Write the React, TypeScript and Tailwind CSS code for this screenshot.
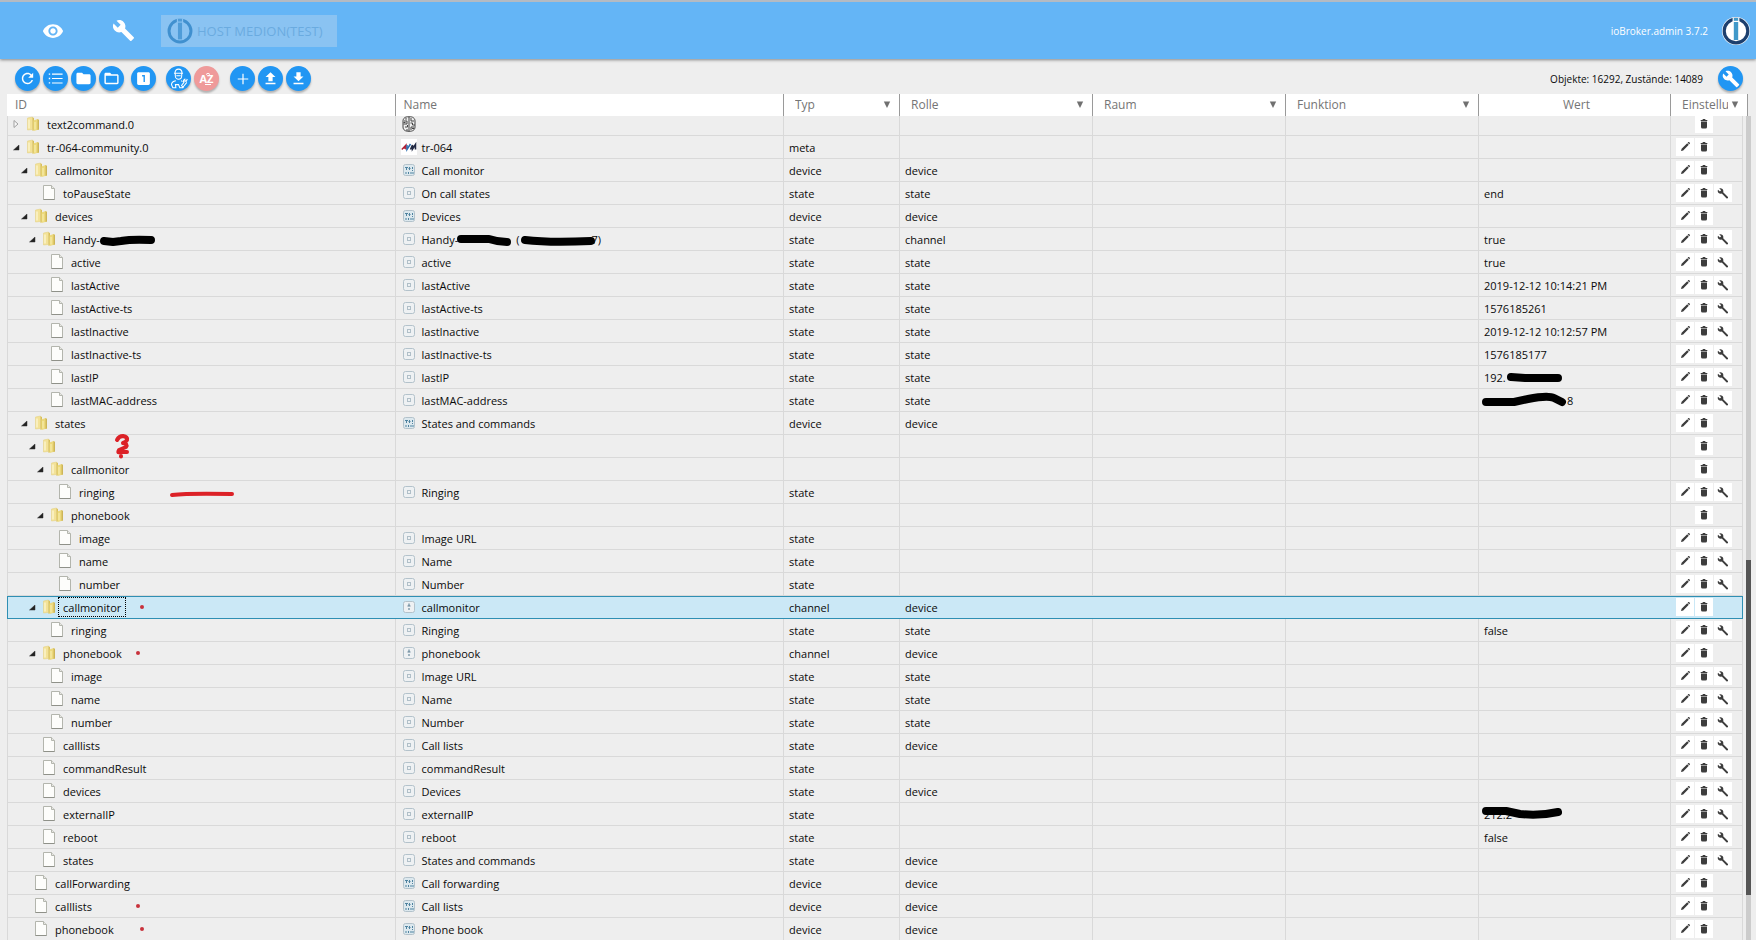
import React from "react";

type IconKind = "device" | "state" | "channel" | "brain" | "avm";
type Row = {
  level: number;
  id: React.ReactNode;
  node: "closed" | "open" | "leaf";
  icon?: IconKind;
  name?: React.ReactNode;
  type?: string;
  role?: string;
  value?: React.ReactNode;
  actions: string; // e = edit, d = delete, c = configure
  selected?: boolean;
};

const WRENCH =
  "M22.7 19l-9.1-9.1c.9-2.3.4-5-1.5-6.9-2-2-5-2.4-7.4-1.3L9 6 6 9 1.6 4.7C.4 7.1.9 10.1 2.9 12.1c1.9 1.9 4.6 2.4 6.9 1.5l9.1 9.1c.4.4 1 .4 1.4 0l2.3-2.3c.5-.4.5-1.1.1-1.4z";
const EYE =
  "M12 4.5C7 4.5 2.73 7.61 1 12c1.73 4.39 6 7.5 11 7.5s9.27-3.11 11-7.5c-1.73-4.39-6-7.5-11-7.5zM12 17c-2.76 0-5-2.24-5-5s2.24-5 5-5 5 2.24 5 5-2.24 5-5 5zm0-8c-1.66 0-3 1.34-3 3s1.34 3 3 3 3-1.34 3-3-1.34-3-3-3z";
const REFRESH =
  "M17.65 6.35C16.2 4.9 14.21 4 12 4c-4.42 0-7.99 3.58-7.99 8s3.57 8 7.99 8c3.73 0 6.84-2.55 7.73-6h-2.08c-.82 2.33-3.04 4-5.65 4-3.31 0-6-2.69-6-6s2.69-6 6-6c1.66 0 3.14.69 4.22 1.78L13 11h7V4l-2.35 2.35z";
const LIST =
  "M2.5 4.8h2v2h-2zM2.5 11h2v2h-2zM2.5 17.2h2v2h-2zM7 5.1h15v1.5H7zM7 11.3h15v1.5H7zM7 17.5h15V19H7z";
const FOLDER =
  "M10 4H4c-1.1 0-1.99.9-1.99 2L2 18c0 1.1.9 2 2 2h16c1.1 0 2-.9 2-2V8c0-1.1-.9-2-2-2h-8l-2-2z";
const FOLDER_OPEN =
  "M20 6h-8l-2-2H4c-1.1 0-1.99.9-1.99 2L2 18c0 1.1.9 2 2 2h16c1.1 0 2-.9 2-2V8c0-1.1-.9-2-2-2zm0 12H4V8h16v10z";
const ONE =
  "M19 3H5c-1.1 0-2 .9-2 2v14c0 1.1.9 2 2 2h14c1.1 0 2-.9 2-2V5c0-1.1-.9-2-2-2zm-5 14h-2V9h-2V7h4v10z";
const ADD = "M19 12.8h-6.2V19h-1.6v-6.2H5v-1.6h6.2V5h1.6v6.2H19z";
const UPLOAD = "M9 16h6v-6h4l-7-7-7 7h4zm-4 2h14v2H5z";
const DOWNLOAD = "M19 9h-4V3H9v6H5l7 7 7-7zM5 18v2h14v-2H5z";

function Glyph({ d, className }: { d: string; className: string }) {
  return (
    <svg viewBox="0 0 24 24" className={className} fill="currentColor" aria-hidden="true">
      <path d={d} />
    </svg>
  );
}

function Logo({ className, ring, bar, disc }: { className: string; ring: string; bar: string; disc: string }) {
  return (
    <svg viewBox="0 0 28 28" className={className} aria-hidden="true">
      <circle cx="14" cy="14" r="14" fill={disc} />
      <circle cx="14" cy="14" r="11.8" fill="none" stroke={ring} strokeWidth="3.2" />
      <rect x="10.6" y="0.5" width="6.8" height="4.6" fill={disc} />
      <rect x="11.8" y="1" width="4.4" height="2.8" fill={bar} />
      <rect x="11.8" y="5" width="4.4" height="18" fill={bar} />
    </svg>
  );
}

function Scribble({ w, d }: { w: number; d: string }) {
  return (
    <svg width={w} height="14" viewBox={`0 0 ${w} 14`} className="shrink-0 overflow-visible" aria-hidden="true">
      <path d={d} fill="none" stroke="#000" strokeWidth="8" strokeLinecap="round" strokeLinejoin="round" />
    </svg>
  );
}

function Mark({ className, children }: { className: string; children: React.ReactNode }) {
  return (
    <svg
      viewBox="0 0 66 24"
      className={`pointer-events-none absolute top-0 h-6 w-[66px] overflow-visible ${className}`}
      fill="none"
      stroke="#dc2127"
      strokeWidth="4"
      strokeLinecap="round"
      strokeLinejoin="round"
      aria-hidden="true"
    >
      {children}
    </svg>
  );
}

const dot = <circle cx="3" cy="11" r="2" fill="#c8323c" stroke="none" />;

const rows: Row[] = [
  { level: 0, id: "text2command.0", node: "closed", icon: "brain", actions: "d" },
  { level: 0, id: "tr-064-community.0", node: "open", icon: "avm", name: "tr-064", type: "meta", actions: "ed" },
  { level: 1, id: "callmonitor", node: "open", icon: "device", name: "Call monitor", type: "device", role: "device", actions: "ed" },
  { level: 2, id: "toPauseState", node: "leaf", icon: "state", name: "On call states", type: "state", role: "state", value: "end", actions: "edc" },
  { level: 1, id: "devices", node: "open", icon: "device", name: "Devices", type: "device", role: "device", actions: "ed" },
  {
    level: 2,
    id: (<>Handy-<Scribble w={56} d="M4 8 L13 9 L21 8 Q32 6 51 7" /></>),
    node: "open",
    icon: "state",
    name: (<>Handy-<Scribble w={54} d="M3 6 L31 6 Q40 9 49 9" /><span className="ml-1">(</span><Scribble w={72} d="M5 7 Q30 10 71 8" />7)</>),
    type: "state", role: "channel", value: "true", actions: "edc",
  },
  { level: 3, id: "active", node: "leaf", icon: "state", name: "active", type: "state", role: "state", value: "true", actions: "edc" },
  { level: 3, id: "lastActive", node: "leaf", icon: "state", name: "lastActive", type: "state", role: "state", value: "2019-12-12 10:14:21 PM", actions: "edc" },
  { level: 3, id: "lastActive-ts", node: "leaf", icon: "state", name: "lastActive-ts", type: "state", role: "state", value: "1576185261", actions: "edc" },
  { level: 3, id: "lastInactive", node: "leaf", icon: "state", name: "lastInactive", type: "state", role: "state", value: "2019-12-12 10:12:57 PM", actions: "edc" },
  { level: 3, id: "lastInactive-ts", node: "leaf", icon: "state", name: "lastInactive-ts", type: "state", role: "state", value: "1576185177", actions: "edc" },
  {
    level: 3, id: "lastIP", node: "leaf", icon: "state", name: "lastIP", type: "state", role: "state",
    value: (<>192.<Scribble w={58} d="M5 6 L19 7 L52 7" /></>), actions: "edc",
  },
  {
    level: 3, id: "lastMAC-address", node: "leaf", icon: "state", name: "lastMAC-address", type: "state", role: "state",
    value: (<><Scribble w={83} d="M2 8 L30 8 L44 5 Q64 1 70 4 L78 8" />8</>), actions: "edc",
  },
  { level: 1, id: "states", node: "open", icon: "device", name: "States and commands", type: "device", role: "device", actions: "ed" },
  {
    level: 2,
    id: (<Mark className="left-[106px]"><path d="M2 5 Q4 1 8 1 Q13 2 12 5 Q11 7 8 8 Q13 9 11 12 L4 15 Q2 18 5 17 L12 17 M6 21 V21.5" /></Mark>),
    node: "open", actions: "d",
  },
  { level: 3, id: "callmonitor", node: "open", actions: "d" },
  {
    level: 4,
    id: (<>ringing<Mark className="left-[160px]"><path d="M3 14 Q20 12 63 13" /></Mark></>),
    node: "leaf", icon: "state", name: "Ringing", type: "state", actions: "edc",
  },
  { level: 3, id: "phonebook", node: "open", actions: "d" },
  { level: 4, id: "image", node: "leaf", icon: "state", name: "Image URL", type: "state", actions: "edc" },
  { level: 4, id: "name", node: "leaf", icon: "state", name: "Name", type: "state", actions: "edc" },
  { level: 4, id: "number", node: "leaf", icon: "state", name: "Number", type: "state", actions: "edc" },
  {
    level: 2, id: (<>callmonitor<Mark className="left-[130px]">{dot}</Mark></>),
    node: "open", icon: "channel", name: "callmonitor", type: "channel", role: "device", actions: "ed", selected: true,
  },
  { level: 3, id: "ringing", node: "leaf", icon: "state", name: "Ringing", type: "state", role: "state", value: "false", actions: "edc" },
  {
    level: 2, id: (<>phonebook<Mark className="left-[126px]">{dot}</Mark></>),
    node: "open", icon: "channel", name: "phonebook", type: "channel", role: "device", actions: "ed",
  },
  { level: 3, id: "image", node: "leaf", icon: "state", name: "Image URL", type: "state", role: "state", actions: "edc" },
  { level: 3, id: "name", node: "leaf", icon: "state", name: "Name", type: "state", role: "state", actions: "edc" },
  { level: 3, id: "number", node: "leaf", icon: "state", name: "Number", type: "state", role: "state", actions: "edc" },
  { level: 2, id: "calllists", node: "leaf", icon: "state", name: "Call lists", type: "state", role: "device", actions: "edc" },
  { level: 2, id: "commandResult", node: "leaf", icon: "state", name: "commandResult", type: "state", actions: "edc" },
  { level: 2, id: "devices", node: "leaf", icon: "state", name: "Devices", type: "state", role: "device", actions: "edc" },
  {
    level: 2, id: "externalIP", node: "leaf", icon: "state", name: "externalIP", type: "state",
    value: (
      <span className="relative flex">
        212.2
        <span className="absolute left-0 top-0 flex"><Scribble w={80} d="M2 4 L22 4 L36 7 Q56 9 74 5" /></span>
      </span>
    ),
    actions: "edc",
  },
  { level: 2, id: "reboot", node: "leaf", icon: "state", name: "reboot", type: "state", value: "false", actions: "edc" },
  { level: 2, id: "states", node: "leaf", icon: "state", name: "States and commands", type: "state", role: "device", actions: "edc" },
  { level: 1, id: "callForwarding", node: "leaf", icon: "device", name: "Call forwarding", type: "device", role: "device", actions: "ed" },
  {
    level: 1, id: (<>calllists<Mark className="left-[126px]">{dot}</Mark></>),
    node: "leaf", icon: "device", name: "Call lists", type: "device", role: "device", actions: "ed",
  },
  {
    level: 1, id: (<>phonebook<Mark className="left-[130px]">{dot}</Mark></>),
    node: "leaf", icon: "device", name: "Phone book", type: "device", role: "device", actions: "ed",
  },
];

const indent = ["pl-px", "pl-[9px]", "pl-[17px]", "pl-[25px]", "pl-[33px]"];

function FolderIcon() {
  return (
    <svg viewBox="0 0 16 16" className="size-4 shrink-0" aria-hidden="true">
      <path d="M2.5 2 7.500 1v12.500L2.500 14z" fill="#f3e297" stroke="#e3cf7c" strokeWidth=".5" />
      <path d="M7.500 1.300 9 2v12l-1.500 1z" fill="#d9c05a" />
      <path d="M8.500 4.500 12.500 3l1.500 1v9.500L8.500 15z" fill="#ecd97c" />
      <path d="M12.500 3 14 4v9.500l-1.500.5z" fill="#cdb558" />
      <path d="M4 3.500v9" stroke="#fdf8d8" strokeWidth="1.200" />
      <path d="M10 6v7.500" stroke="#f9f0b6" strokeWidth="1" />
    </svg>
  );
}

function FileIcon() {
  return (
    <svg viewBox="0 0 16 16" className="size-4 shrink-0" aria-hidden="true">
      <path d="M2.500 .5h8l3 3v11h-11z" fill="#fdfdfb" stroke="#b3b5ad" />
      <path d="M10.500 .5v3h3" fill="#e8e8e4" stroke="#b4b6ae" />
      <path d="M2.500 14.500h11" stroke="#8f9189" />
    </svg>
  );
}

function Expander({ node }: { node: Row["node"] }) {
  return (
    <svg viewBox="0 0 12 12" className="size-3 shrink-0" aria-hidden="true">
      {node === "open" && <path d="M9 4v5H3.500z" fill="#222" stroke="#333" strokeWidth=".5" />}
      {node === "closed" && <path d="M4 2.500 8 6 4 9.500z" fill="#f8f8f8" stroke="#a0a0a0" />}
    </svg>
  );
}

function NameIcon({ kind }: { kind: IconKind }) {
  if (kind === "avm")
    return (
      <svg viewBox="0 0 16 16" className="size-4 shrink-0" aria-hidden="true">
        <path d="M0 0h16v16H0z" fill="#fff" />
        <path d="M.8 10.500 5 6v4.500M2 9h3" fill="none" stroke="#b02036" strokeWidth="1.400" />
        <path d="M6 6v4.500L9.500 5" fill="none" stroke="#2d6fb0" strokeWidth="1.500" />
        <path d="M9.500 10.500 11.500 6v4L14.500 5.500v5" fill="none" stroke="#222a44" strokeWidth="1.600" />
      </svg>
    );
  if (kind === "brain")
    return (
      <svg viewBox="0 0 16 16" className="size-4 shrink-0" fill="none" stroke="#444" strokeWidth="1" aria-hidden="true">
        <path d="M8 .8C4 .4 2 2.500 2 5v6c0 3 2.500 4.500 6 4.300 3.500.2 6-1.300 6-4.300V5c0-2.500-2-4.600-6-4.200z" />
        <path d="M8 1v14M3 5h3v3H2.500M4 11h2.500V9M6 13v2M5 1.800v2M10 2v3h3M9.500 7h2v2h2.500M10 14v-3h3M4.500 6.500h-2M11 12.500h2" />
      </svg>
    );
  return (
    <svg viewBox="0 0 16 16" className="size-4 shrink-0" fill="none" aria-hidden="true">
      <rect x="2.500" y="2.500" width="11" height="11" rx="2" stroke="#b3c2cb" fill={kind === "device" ? "#dce8ee" : "#eef1f3"} />
      {kind === "state" && <rect x="6.500" y="6.500" width="3" height="3" stroke="#b0bfc8" />}
      {kind === "channel" && <path d="M8 4.500v3M8 9v2M6.500 7h3" stroke="#5f8094" strokeWidth="1.100" />}
      {kind === "device" && (
        <path d="M4 5.500h3M5.500 5v3M8.500 5v3M11.500 5v2M7.500 6.500h2M5 10v2M7.500 10v2M10 10v2M12 10v2M11.500 8v1" stroke="#4f83a0" strokeWidth="1" />
      )}
    </svg>
  );
}

const actionInfo: Record<string, { label: string; art: React.ReactNode }> = {
  e: {
    label: "Bearbeiten",
    art: <path d="M5 13l.6-2.200 5.600-5.600 1.600 1.600-5.600 5.600zM11.700 4.700l.6-.6q.5-.3 1 .1l.5.5q.4.500 0 1l-.6.6z" />,
  },
  d: {
    label: "Löschen",
    art: <path d="M6 6.500h6V12q0 1.500-1.500 1.500h-3Q6 13.500 6 12zM5.700 5h1.600l.7-.9h2l.7.9h1.600v1.100H5.700z" />,
  },
  c: {
    label: "Einstellungen",
    art: <path d="M14 13 9.200 8.300c.4-1.200.1-2.400-.7-3.200-1-.9-2.300-1-3.200-.6l1.900 1.800-1.300 1.300L4 5.800c-.5 1-.3 2.300.6 3.100.9.800 2.100 1 3.200.6l4.600 4.800q1 .5 1.600-.3z" />,
  },
};

function Action({ kind, present }: { kind: string; present: boolean }) {
  if (!present) return <span className="size-[18px]" />;
  const { label, art } = actionInfo[kind];
  return (
    <button type="button" aria-label={label} className="size-[18px] bg-white text-[#3d3d3d]">
      <svg viewBox="0 0 18 18" className="size-[18px]" fill="currentColor" aria-hidden="true">
        {art}
      </svg>
    </button>
  );
}

function Round({ label, tone = "bg-[#2196f3]", children }: { label: string; tone?: string; children: React.ReactNode }) {
  return (
    <button
      type="button"
      aria-label={label}
      className={`flex size-[25px] items-center justify-center rounded-full text-white shadow-[0_2px_2px_rgba(0,0,0,0.25)] ${tone}`}
    >
      {children}
    </button>
  );
}

function Columns() {
  return (
    <colgroup>
      <col />
      <col />
      <col className="w-[116px]" />
      <col className="w-[193px]" />
      <col className="w-[193px]" />
      <col className="w-[193px]" />
      <col className="w-[192px]" />
      <col className="w-[72px]" />
    </colgroup>
  );
}

function FilterSelect({ label, tight = false }: { label: string; tight?: boolean }) {
  return (
    <div className={`flex items-center overflow-hidden pl-[11px] ${tight ? "gap-[3px] pr-1" : "pr-2"}`}>
      <select aria-label={label} className="w-0 min-w-0 flex-1 appearance-none overflow-hidden bg-transparent">
        <option>{label}</option>
      </select>
      <svg viewBox="0 0 8 8" className="size-2 shrink-0" aria-hidden="true">
        <path d="M.8 .5h6.400L4 7z" fill="#707070" />
      </svg>
    </div>
  );
}

const th = "h-[22px] border-r border-[#9a9a9a] p-0 text-left font-normal";
const td = "h-[23px] border-b border-r p-0";
const line22 = "flex h-[22px] items-center whitespace-nowrap pt-[2px]";

export default function App() {
  return (
    <div className="flex h-screen flex-col overflow-hidden bg-[#eee] font-['Open_Sans','Noto_Sans',sans-serif] text-[11px] leading-4 text-[#0a0a0a]">
      <header className="z-10 flex h-[59px] shrink-0 items-center border-t-2 border-[#b4bac2] bg-[#64b5f6] pl-[42px] pr-[6px] shadow-[0_1px_3px_rgba(0,0,0,0.45)]">
        <button type="button" aria-label="Sichtbarkeit" className="text-white">
          <Glyph d={EYE} className="size-[22px]" />
        </button>
        <button type="button" aria-label="Systemeinstellungen" className="ml-12 text-white">
          <Glyph d={WRENCH} className="size-[23px]" />
        </button>
        <button type="button" className="ml-[26px] flex h-8 w-[176px] items-center gap-1 bg-[#8ac3f2] pl-[6px] text-[13px] text-[#6aabe0]">
          <Logo className="size-[26px] shrink-0" ring="#4090cf" bar="#4f9cd8" disc="#8ac3f2" />
          <span className="whitespace-nowrap">HOST MEDION(TEST)</span>
        </button>
        <span className="ml-auto text-[10px] text-white">ioBroker.admin 3.7.2</span>
        <Logo className="ml-[14px] size-7" ring="#1c3f6e" bar="#4199c9" disc="#fff" />
      </header>

      <div className="flex h-[35px] shrink-0 items-center pb-px pl-[15px] pr-[13px] pt-[5px]">
        <div className="flex gap-[3px]">
          <Round label="Aktualisieren"><Glyph d={REFRESH} className="size-[17px]" /></Round>
          <Round label="Liste"><Glyph d={LIST} className="size-[17px]" /></Round>
          <Round label="Alle zuklappen"><Glyph d={FOLDER} className="size-[17px]" /></Round>
          <Round label="Alle aufklappen"><Glyph d={FOLDER_OPEN} className="size-[17px]" /></Round>
        </div>
        <div className="ml-[7px] flex">
          <Round label="Eine Ebene"><Glyph d={ONE} className="size-[17px]" /></Round>
        </div>
        <div className="ml-[10px] flex gap-[3px]">
          <Round label="Expertenmodus">
            <svg viewBox="0 0 24 24" className="size-[21px]" fill="none" stroke="currentColor" strokeWidth="1.200" aria-hidden="true">
              <path d="M8 6C8 3 9.500 1.300 12 1.300S16 3 16 6M6.800 6h10.400M8.300 6.500V8.500c0 2.500 1.700 4.300 3.700 4.300s3.700-1.800 3.700-4.300V6.500M9.500 8.800h5" />
              <path d="M9 14.500c-3 .5-5 2-5 4.500l1.500 3.500H9l-.5-3.500h3.500l1.500 3.500h3.500l1-1.500M15 14.500l1.500 1M22 12.500l-1 2.500h-1.500l-.3-2.300c-1.500.8-1.800 2.300-1 3.800l-2.700 3.500 1.500 2 4.500-5.500" />
            </svg>
          </Round>
          <Round label="Sortieren" tone="bg-[#ef9a9a]">
            <span className="relative text-[11px] font-bold leading-none">
              AZ
              <svg viewBox="0 0 16 16" className="absolute inset-0 size-4" fill="none" stroke="currentColor" aria-hidden="true">
                <path d="M6 1.500Q8-1 10 1.500M5 11.500h6" />
              </svg>
            </span>
          </Round>
        </div>
        <div className="ml-[11px] flex gap-[3px]">
          <Round label="Hinzufügen"><Glyph d={ADD} className="size-[18px]" /></Round>
          <Round label="Hochladen"><Glyph d={UPLOAD} className="size-[17px]" /></Round>
          <Round label="Herunterladen"><Glyph d={DOWNLOAD} className="size-[17px]" /></Round>
        </div>
        <span className="ml-auto mr-[15px] text-[10px]">Objekte: 16292, Zustände: 14089</span>
        <Round label="Konfiguration"><Glyph d={WRENCH} className="size-[18px]" /></Round>
      </div>

      <main className="flex min-h-0 flex-1 pl-[7px] pr-[5px]">
        <div className="flex min-w-0 flex-1 flex-col">
          <table className="w-full shrink-0 table-fixed border-separate border-spacing-0 bg-white text-xs text-[#757575]">
            <Columns />
            <thead>
              <tr>
                <th className={th}>
                  <input aria-label="ID" placeholder="ID" className="block w-full bg-transparent pl-2 placeholder:text-[#757575]" />
                </th>
                <th className={th}>
                  <input aria-label="Name" placeholder="Name" className="block w-full bg-transparent pl-2 placeholder:text-[#757575]" />
                </th>
                <th className={th}><FilterSelect label="Typ" /></th>
                <th className={th}><FilterSelect label="Rolle" /></th>
                <th className={th}><FilterSelect label="Raum" /></th>
                <th className={th}><FilterSelect label="Funktion" /></th>
                <th className={`${th} pl-1! text-center!`}>Wert</th>
                <th className="h-[22px] p-0 text-left font-normal"><FilterSelect label="Einstellungen" tight /></th>
              </tr>
            </thead>
          </table>
          <div className="min-h-0 flex-1 overflow-hidden">
            <table className="-mt-[3px] w-full table-fixed border-separate border-spacing-0">
              <Columns />
              <tbody>
                {rows.map((r, i) => {
                  const line = r.selected ? "border-[#cbe8f6]" : "border-[#d9d9d9]";
                  return (
                    <tr key={i} className={r.selected ? "bg-[#cbe8f6] outline outline-1 -outline-offset-1 outline-[#2f8fb3]" : ""}>
                      <td className={`${td} ${line} border-l`}>
                        <div className={`relative ml-px flex h-[22px] items-center ${indent[r.level]}`}>
                          <Expander node={r.node} />
                          <span className="ml-[3px] flex">{r.node === "leaf" ? <FileIcon /> : <FolderIcon />}</span>
                          <span
                            className={`ml-px flex items-center whitespace-nowrap border px-1 pt-px ${r.selected ? "h-[20px] border-dotted border-black" : "border-transparent"}`}
                          >
                            {r.id}
                          </span>
                        </div>
                      </td>
                      <td className={`${td} ${line}`}>
                        <div className="flex h-[22px] items-center gap-[5px] whitespace-nowrap pl-[5px]">
                          {r.icon && <NameIcon kind={r.icon} />}
                          <span className="flex items-center pt-[2px]">{r.name}</span>
                        </div>
                      </td>
                      <td className={`${td} ${line}`}><div className={`${line22} pl-[5px]`}>{r.type}</div></td>
                      <td className={`${td} ${line}`}><div className={`${line22} pl-[5px]`}>{r.role}</div></td>
                      <td className={`${td} ${line}`} />
                      <td className={`${td} ${line}`} />
                      <td className={`${td} ${line}`}><div className={`${line22} pl-[5px]`}>{r.value}</div></td>
                      <td className={`${td} ${line}`}>
                        <div className="flex h-[22px] gap-px pl-[5px] pt-[2px]">
                          {["e", "d", "c"].map((k) => (
                            <Action key={k} kind={k} present={r.actions.includes(k)} />
                          ))}
                        </div>
                      </td>
                    </tr>
                  );
                })}
              </tbody>
            </table>
          </div>
        </div>
        <div className="flex w-2 shrink-0 flex-col" aria-hidden="true">
          <div className="h-[22px] w-[5px] shrink-0 border-r border-[#9a9a9a] bg-white" />
          <div className="ml-[3px] flex w-[5px] flex-1 flex-col bg-[#ccc]">
            <div className="grow-[444]" />
            <div className="grow-[335] bg-[#555]" />
            <div className="grow-[45]" />
          </div>
        </div>
      </main>
    </div>
  );
}
